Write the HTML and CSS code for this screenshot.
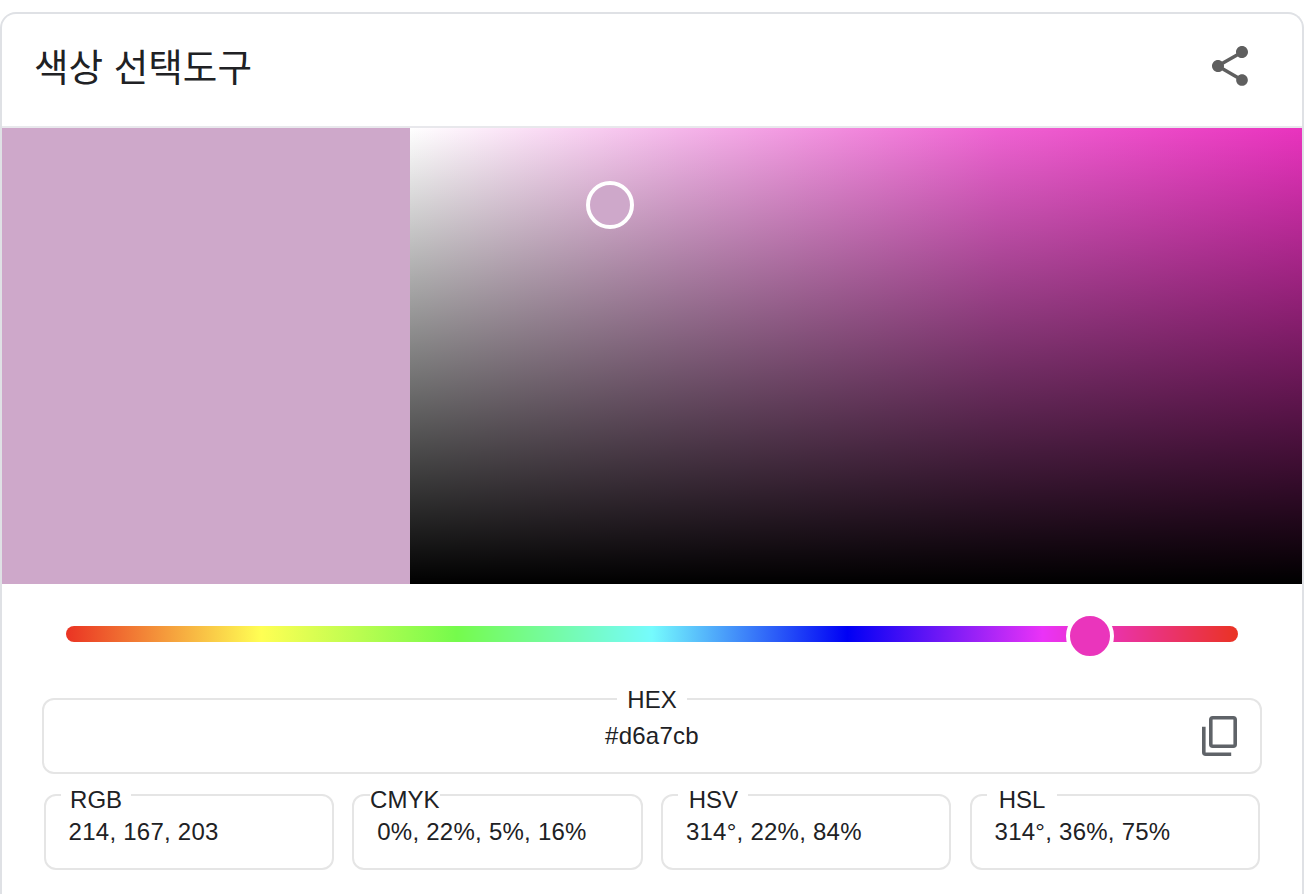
FILE: index.html
```html
<!DOCTYPE html>
<html lang="ko">
<head>
<meta charset="utf-8">
<title>색상 선택도구</title>
<link rel="stylesheet" href="styles.css">
</head>
<body>
<main class="card">
  <header class="card-header">
    <h1 class="title">색상 선택도구</h1>
    <svg class="share-icon" viewBox="0 0 24 24" aria-label="공유"><path d="M18 16.08c-.76 0-1.44.3-1.96.77L8.91 12.7c.05-.23.09-.46.09-.7s-.04-.47-.09-.7l7.05-4.11c.54.5 1.25.81 2.04.81 1.66 0 3-1.34 3-3s-1.34-3-3-3-3 1.34-3 3c0 .24.04.47.09.7L8.04 9.81C7.5 9.31 6.79 9 6 9c-1.66 0-3 1.34-3 3s1.34 3 3 3c.79 0 1.5-.31 2.04-.81l7.12 4.16c-.05.21-.08.43-.08.65 0 1.61 1.31 2.92 2.92 2.92 1.61 0 2.92-1.31 2.92-2.92s-1.31-2.92-2.92-2.92z"/></svg>
  </header>
  <section class="picker">
    <div class="swatch"></div>
    <div class="palette"><span class="palette-handle"></span></div>
  </section>
  <div class="hue-track"><span class="hue-thumb"></span></div>
  <fieldset class="field field-hex">
    <legend class="field-label">HEX</legend>
    <div class="field-value">#d6a7cb</div>
    <svg class="copy-icon" viewBox="0 0 36 40" aria-label="복사"><path d="M8.8 3.8a2 2 0 0 1 2-2h20.4a2 2 0 0 1 2 2v24.4a2 2 0 0 1-2 2h-20.4a2 2 0 0 1-2-2z"/><path d="M1.8 10.7v25.5a2 2 0 0 0 2 2h25.4"/></svg>
  </fieldset>
  <div class="field-row">
    <fieldset class="field">
      <legend class="field-label">RGB</legend>
      <div class="field-value">214, 167, 203</div>
    </fieldset>
    <fieldset class="field">
      <legend class="field-label">CMYK</legend>
      <div class="field-value">0%, 22%, 5%, 16%</div>
    </fieldset>
    <fieldset class="field">
      <legend class="field-label">HSV</legend>
      <div class="field-value">314°, 22%, 84%</div>
    </fieldset>
    <fieldset class="field">
      <legend class="field-label">HSL</legend>
      <div class="field-value">314°, 36%, 75%</div>
    </fieldset>
  </div>
</main>
</body>
</html>
```
FILE: styles.css
```css
* { box-sizing: border-box; }
html, body { margin: 0; height: 100%; overflow: hidden; background: #fff; }
body { padding-top: 12px; font-family: "Liberation Sans", Arial, sans-serif; color: #202124; }

.card {
  height: 882px;
  border: 2px solid #dfe1e5;
  border-bottom: 0;
  border-radius: 16px 16px 0 0;
  background: #fff;
}

.card-header {
  height: 114px;
  padding: 0 48px 8px 32px;
  display: flex;
  align-items: center;
  justify-content: space-between;
  border-bottom: 2px solid #e8e8ec;
}
.title {
  margin: 0 0 4px;
  font: 400 37.6px "Noto Sans CJK KR", sans-serif;
}
.share-icon { width: 48px; height: 48px; fill: #5f5f5f; }

.picker { display: flex; height: 456px; }
.swatch { width: 408px; background: #cea8ca; }
.palette {
  flex: 1;
  position: relative;
  background:
    linear-gradient(to bottom, rgba(0,0,0,0), #000),
    linear-gradient(to right, #fff 0%, #f5b6ea 30%, #ef62d2 66%, #e933be 100%);
}
.palette-handle {
  position: absolute;
  left: 176px;
  top: 53px;
  width: 48px;
  height: 48px;
  border: 4px solid #fff;
  border-radius: 50%;
  background: #cea8ca;
}

.hue-track {
  position: relative;
  height: 16px;
  margin: 42px 64px 0;
  border-radius: 8px;
  background: linear-gradient(to right, #ea3323 0%, #ffff54 16.67%, #75fb4c 33.33%, #75fbfd 50%, #0000f5 66.67%, #ea33f7 83.33%, #ea3323 100%);
}
.hue-thumb {
  position: absolute;
  left: 1000px;
  top: -14px;
  width: 48px;
  height: 48px;
  border: 4px solid #fff;
  border-radius: 50%;
  background: #ea35bc;
}

.field {
  position: relative;
  min-width: 0;
  margin: 0;
  padding: 0;
  height: 87px;
  border: 2px solid #e5e5e5;
  border-radius: 12px;
}
.field-label {
  display: flex;
  justify-content: center;
  width: 70px;
  height: 24px;
  padding: 5px 0 0;
  margin-left: 15.5px;
  font-size: 24px;
  line-height: 24px;
}
.field-value {
  margin-top: 11px;
  padding-left: 23px;
  font-size: 24px;
  line-height: 28px;
  letter-spacing: 0.25px;
  white-space: nowrap;
}

.field-hex { margin: 45px 40px 0; }
.field-hex .field-label { margin: 0 auto; padding-top: 1px; }
.field-hex .field-value { padding-left: 0; text-align: center; }
.copy-icon {
  position: absolute;
  right: 22px;
  top: 5px;
  width: 36px;
  height: 40px;
  fill: none;
  stroke: #5f6368;
  stroke-width: 3.6;
}

.field-row {
  display: grid;
  grid-template-columns: repeat(4, 290.5px);
  column-gap: 18.17px;
  margin: 9px 0 0 41.6px;
}
```
